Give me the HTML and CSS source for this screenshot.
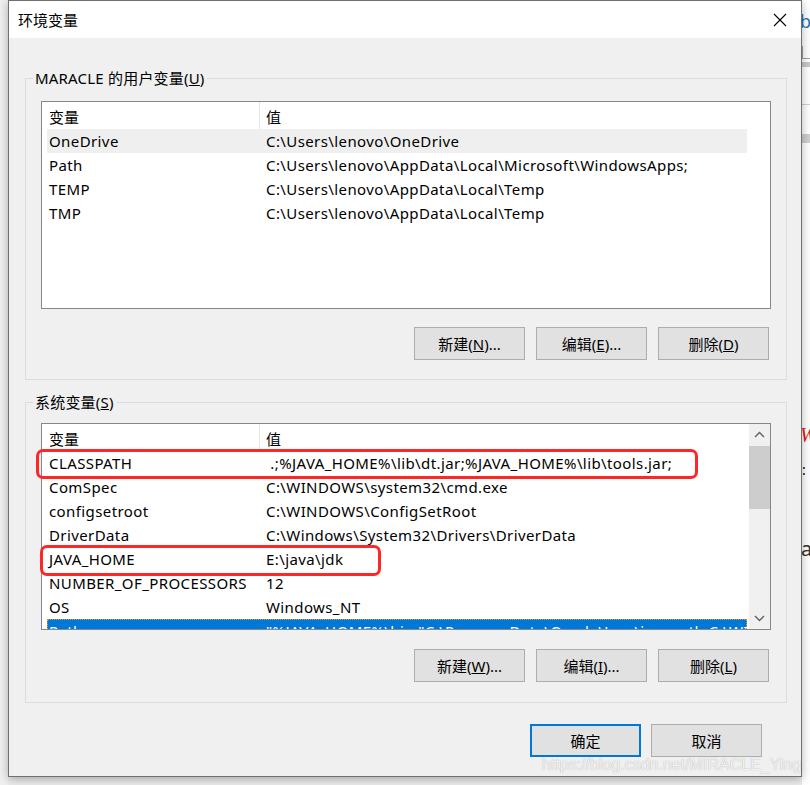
FILE: index.html
```html
<!DOCTYPE html>
<html lang="zh-CN">
<head>
  <meta charset="UTF-8" />
  <title>环境变量</title>
  <link rel="stylesheet" href="styles.css">
</head>
<body>
  <div class="screen">
    <div class="bg-left"></div>

    <div class="dialog">
      <div class="titlebar">
        <span class="title">环境变量</span>
        <svg class="close" width="14" height="14" viewBox="0 0 14 14">
          <path d="M1 1 L13 13 M13 1 L1 13" stroke="#000" stroke-width="1.1" fill="none" />
        </svg>
      </div>

      <div class="dialog-body">
        <fieldset class="group group-user">
          <legend>MARACLE 的用户变量(<u>U</u>)</legend>
          <div class="list">
            <div class="list-rows">
              <div class="row head"><span>变量</span><span>值</span></div>
              <div class="row hover"><span>OneDrive</span><span>C:\Users\lenovo\OneDrive</span></div>
              <div class="row"><span>Path</span><span>C:\Users\lenovo\AppData\Local\Microsoft\WindowsApps;</span></div>
              <div class="row"><span>TEMP</span><span>C:\Users\lenovo\AppData\Local\Temp</span></div>
              <div class="row"><span>TMP</span><span>C:\Users\lenovo\AppData\Local\Temp</span></div>
            </div>
          </div>
          <div class="btn-row">
            <button class="btn">新建(<u>N</u>)...</button>
            <button class="btn">编辑(<u>E</u>)...</button>
            <button class="btn">删除(<u>D</u>)</button>
          </div>
        </fieldset>

        <fieldset class="group group-system">
          <legend>系统变量(<u>S</u>)</legend>
          <div class="list list-system">
            <div class="list-rows">
              <div class="row head"><span>变量</span><span>值</span></div>
              <div class="row"><span>CLASSPATH</span><span class="pre"> .;%JAVA_HOME%\lib\dt.jar;%JAVA_HOME%\lib\tools.jar;</span></div>
              <div class="row"><span>ComSpec</span><span>C:\WINDOWS\system32\cmd.exe</span></div>
              <div class="row"><span>configsetroot</span><span>C:\WINDOWS\ConfigSetRoot</span></div>
              <div class="row"><span>DriverData</span><span>C:\Windows\System32\Drivers\DriverData</span></div>
              <div class="row"><span>JAVA_HOME</span><span>E:\java\jdk</span></div>
              <div class="row"><span>NUMBER_OF_PROCESSORS</span><span>12</span></div>
              <div class="row"><span>OS</span><span>Windows_NT</span></div>
              <div class="row selected"><span>Path</span><span>"%JAVA_HOME%\bin;"C:\ProgramData\Oracle\Java\javapath;C:\WINDOWS</span></div>
            </div>
            <div class="scrollbar">
              <svg class="arrow" width="21" height="22" viewBox="0 0 21 22">
                <path d="M6 13 L10.5 8.5 L15 13" stroke="#606060" stroke-width="1.4" fill="none" />
              </svg>
              <div class="thumb"></div>
              <div class="track"></div>
              <svg class="arrow" width="21" height="22" viewBox="0 0 21 22">
                <path d="M6 9 L10.5 13.5 L15 9" stroke="#606060" stroke-width="1.4" fill="none" />
              </svg>
            </div>
          </div>
          <div class="btn-row">
            <button class="btn">新建(<u>W</u>)...</button>
            <button class="btn">编辑(<u>I</u>)...</button>
            <button class="btn">删除(<u>L</u>)</button>
          </div>
        </fieldset>

        <div class="dialog-foot">
          <button class="btn btn-default">确定</button>
          <button class="btn">取消</button>
        </div>
      </div>

      <!-- red annotation boxes drawn over the list -->
      <div class="mark mark-classpath"></div>
      <div class="mark mark-javahome"></div>
      <div class="watermark">https://blog.csdn.net/MIRACLE_Ying</div>
    </div>

    <div class="bg-right">
      <div class="peek peek-text">b</div>
      <div class="peek peek-tab"></div>
      <div class="peek peek-band"></div>
      <div class="peek peek-line"></div>
      <div class="peek peek-band2"></div>
      <div class="peek peek-red">W</div>
      <div class="peek peek-dot">:</div>
      <div class="peek peek-a">a</div>
    </div>
  </div>
</body>
</html>
```

FILE: styles.css
```css
body {
  margin: 0;
  font-family: "Segoe UI", "Noto Sans", "Noto Sans CJK SC", sans-serif;
  font-size: 15px;
  color: #000;
  background-color: #ececec;
}

.screen {
  display: flex;
  width: 810px;
  height: 785px;
  overflow: hidden;
}

.bg-left {
  width: 8px;
  flex-shrink: 0;
  background-color: #f0f0f0;
}

.dialog {
  position: relative;
  z-index: 1;
  width: 794px;
  height: 777px;
  flex-shrink: 0;
  box-sizing: border-box;
  border: 1px solid #707070;
  background-color: #f0f0f0;
  box-shadow: 0 2px 9px rgba(0, 0, 0, 0.3);
  display: flex;
  flex-direction: column;
}

.titlebar {
  height: 37px;
  background-color: #ffffff;
  display: flex;
  align-items: center;
  justify-content: space-between;
  padding: 0 14px 0 9px;
}

.title {
  line-height: 20px;
}

.dialog-body {
  flex: 1;
  padding: 30px 14px 0 16px;
}

.group {
  margin: 0;
  padding: 13px 15px 19px 15px;
  border: 1px solid #dcdcdc;
  min-width: 0;
}

.group legend {
  margin-left: -8px;
  padding: 0 2px;
  line-height: 20px;
  letter-spacing: 0.2px;
}

.group-system {
  margin-top: 12px;
  padding-top: 11px;
  padding-bottom: 20px;
}

.list {
  height: 208px;
  box-sizing: border-box;
  border: 1px solid #828790;
  background-color: #ffffff;
  display: flex;
  overflow: hidden;
}

.list-system {
  height: 207px;
}

.list-rows {
  flex: 1;
  padding-left: 5px;
  overflow: hidden;
}

.row {
  display: grid;
  grid-template-columns: 212px 1fr;
  width: 700px;
  height: 24px;
  line-height: 24px;
  white-space: nowrap;
  box-sizing: border-box;
  letter-spacing: 0.4px;
}

.row span {
  overflow: hidden;
}

.row span:first-child {
  padding-left: 2px;
}

.row span:last-child {
  padding-left: 7px;
}

.row.head {
  height: 27px;
  padding-top: 3px;
  letter-spacing: 0;
}

.row.head span:last-child {
  border-left: 1px solid #e5e5e5;
  padding-left: 6px;
  margin-top: -3px;
  padding-top: 3px;
}

.row.hover {
  background-color: #efefef;
}

.row.selected {
  background-color: #0078d7;
  color: #ffffff;
  outline: 1px dotted #f0a000;
  outline-offset: -1px;
}

.pre {
  white-space: pre;
}

.scrollbar {
  width: 21px;
  flex-shrink: 0;
  background-color: #f0f0f0;
  display: flex;
  flex-direction: column;
}

.arrow {
  display: block;
  flex-shrink: 0;
}

.thumb {
  height: 63px;
  flex-shrink: 0;
  background-color: #cdcdcd;
}

.track {
  flex: 1;
}

.btn-row {
  display: flex;
  justify-content: flex-end;
  gap: 11px;
  margin-top: 18px;
  margin-right: 2px;
}

.group-system .btn-row {
  margin-top: 19px;
}

.btn {
  width: 111px;
  height: 33px;
  box-sizing: border-box;
  border: 1px solid #adadad;
  background-color: #e1e1e1;
  font-family: inherit;
  font-size: 15px;
  color: #000;
  padding: 0;
  line-height: 20px;
}

.btn-default {
  border: 2px solid #0078d7;
}

.dialog-foot {
  display: flex;
  justify-content: flex-end;
  gap: 10px;
  margin-top: 21px;
  padding-right: 25px;
}

.mark {
  position: absolute;
  box-sizing: border-box;
  border: 3px solid #ff2626;
  border-radius: 7px;
}

.mark-classpath {
  left: 27px;
  top: 448px;
  width: 662px;
  height: 30px;
}

.mark-javahome {
  left: 31px;
  top: 544px;
  width: 341px;
  height: 31px;
}

.watermark {
  position: absolute;
  left: 533px;
  top: 755px;
  font-family: "Liberation Sans", Arial, sans-serif;
  font-size: 16px;
  color: rgba(255, 255, 255, 0.85);
  text-shadow: 0 0 1px rgba(0, 0, 0, 0.35);
  white-space: nowrap;
}

.bg-right {
  flex: 1;
  background-color: #ffffff;
  position: relative;
}

.peek {
  position: absolute;
  left: 0;
}

.peek-text {
  top: 9px;
  left: -2px;
  font-size: 18px;
  color: #2a6fb0;
}

.peek-tab {
  top: 46px;
  width: 8px;
  height: 12px;
  border: 1px solid #a0a0a0;
  border-top: 0;
}

.peek-band {
  top: 62px;
  width: 8px;
  height: 5px;
  background-color: #c8c8c8;
}

.peek-line {
  top: 104px;
  width: 8px;
  height: 1px;
  background-color: #d0d0d0;
}

.peek-band2 {
  top: 134px;
  width: 8px;
  height: 9px;
  background-color: #cfcfcf;
}

.peek-red {
  top: 424px;
  left: -2px;
  font-family: "Liberation Serif", serif;
  font-style: italic;
  font-size: 20px;
  color: #e02020;
}

.peek-dot {
  top: 460px;
  left: 0;
  font-size: 14px;
}

.peek-a {
  top: 535px;
  left: -1px;
  font-size: 20px;
  color: #333;
}
```
